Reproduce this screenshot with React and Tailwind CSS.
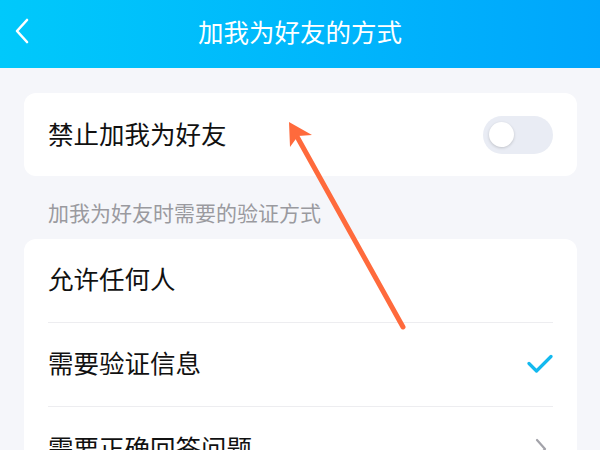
import React, { useState } from "react";

const FONT = { fontFamily: '"Noto Sans CJK SC", "Noto Sans", sans-serif' };

const rows = [
  { label: "允许任何人", mark: null },
  { label: "需要验证信息", mark: "check" },
  { label: "需要正确回答问题", mark: "chevron" },
];

const App = () => {
  const [blocked, setBlocked] = useState(false);

  return (
    <div className="relative w-[600px] h-[450px] overflow-hidden bg-[#f5f6fa]" style={FONT}>
      {/* Header */}
      <header className="relative h-[68px] flex items-center justify-center pb-[7px] bg-gradient-to-r from-[#00c9fb] to-[#00a6fc]">
        <button className="absolute left-[12px] top-[16px] w-[20px] h-[30px] flex items-center justify-center">
          <svg width="16" height="28" viewBox="0 0 16 28" fill="none">
            <path d="M13 3 L3 14 L13 25" stroke="white" strokeWidth="2.6" strokeLinecap="round" strokeLinejoin="round" />
          </svg>
        </button>
        <h1 className="text-white text-[25.5px] leading-none">加我为好友的方式</h1>
      </header>

      <main className="pl-[24px] pr-[23px] pt-[25px]">
        {/* Block toggle */}
        <div className="h-[83px] bg-white rounded-[12px] flex items-center justify-between pl-[24px] pr-[24px]">
          <span className="text-[25.5px] leading-none text-[#111] mb-[4px]">禁止加我为好友</span>
          <button
            onClick={() => setBlocked(!blocked)}
            className="w-[70px] h-[38px] rounded-full bg-[#e9ecf4] flex items-center px-[6px]"
          >
            <span className="w-[25px] h-[25px] rounded-full bg-white shadow-[0_1px_3px_rgba(0,0,0,0.18)]" />
          </button>
        </div>

        {/* Section label */}
        <div className="h-[63px] pt-[9px] flex items-center px-[24px]">
          <span className="text-[21px] leading-none text-[#9a9a9f]">加我为好友时需要的验证方式</span>
        </div>

        {/* Options */}
        <div className="bg-white rounded-[12px] px-[24px]">
          {rows.map((row, i) => (
            <div
              key={row.label}
              className={`h-[84px] flex items-center justify-between ${i < rows.length - 1 ? "border-b border-[#ededf0]" : ""}`}
            >
              <span className="text-[25.5px] leading-none text-[#111] mb-[5px]">{row.label}</span>
              {row.mark === "check" && (
                <svg width="26" height="20" viewBox="0 0 26 20" fill="none" className="mb-[2px]">
                  <path d="M2 9.5 L9.5 17 L24 2.5" stroke="#13b9ef" strokeWidth="3.2" strokeLinecap="round" strokeLinejoin="round" />
                </svg>
              )}
              {row.mark === "chevron" && (
                <svg width="12" height="22" viewBox="0 0 12 22" fill="none" className="mr-[6px]">
                  <path d="M2 2 L10 11 L2 20" stroke="#a3a3aa" strokeWidth="2.2" strokeLinecap="round" strokeLinejoin="round" />
                </svg>
              )}
            </div>
          ))}
        </div>
      </main>

      {/* Annotation arrow */}
      <svg className="absolute left-0 top-0 pointer-events-none" width="600" height="450" viewBox="0 0 600 450">
        <line x1="403" y1="327" x2="295" y2="133" stroke="#ff6a3c" strokeWidth="5" strokeLinecap="round" />
        <polygon points="289,122 312,135 298,136 290,147" fill="#ff6a3c" />
      </svg>
    </div>
  );
};

export default App;
